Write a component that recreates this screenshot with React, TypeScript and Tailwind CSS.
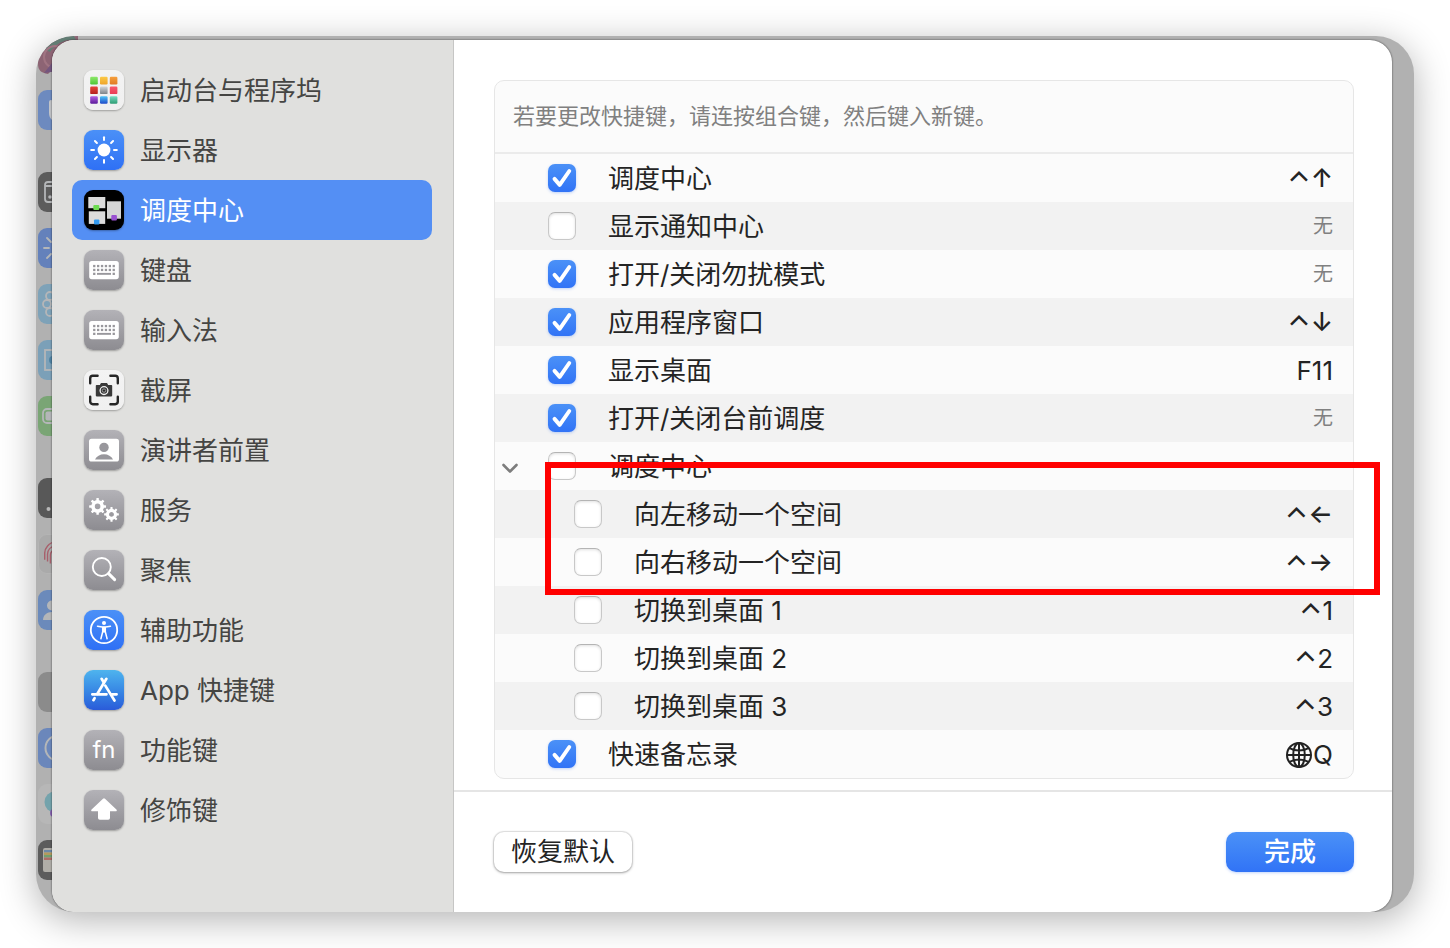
import { useState } from "react";
import type { ReactNode } from "react";

/* ---------- sidebar glyphs, all on a 40 x 40 grid ---------- */

const svgClass = "size-10 block";

function LaunchpadGlyph() {
  const cells = [
    ["#8de86b", "#4fc636"], ["#fbc947", "#f0a52c"], ["#f6a03c", "#e07a25"],
    ["#e8453b", "#b3201c"], ["#d3d6da", "#7d8388"], ["#f9586c", "#ea3d55"],
    ["#b45fe0", "#5a1a9a"], ["#4fc4f7", "#1f49c9"], ["#76dcc0", "#2e9c74"],
  ];
  return (
    <svg viewBox="0 0 40 40" className={svgClass} aria-hidden="true">
      <defs>
        {cells.map(([a, b], i) => (
          <linearGradient key={i} id={`cell${i}`} x1="0" y1="0" x2="0" y2="1">
            <stop offset="0" stopColor={a} />
            <stop offset="1" stopColor={b} />
          </linearGradient>
        ))}
      </defs>
      {cells.map((_, i) => (
        <rect key={i} x={6.2 + (i % 3) * 9.8} y={6.8 + Math.floor(i / 3) * 9.7} width="7.6" height="7.6" rx="1.2" fill={`url(#cell${i})`} />
      ))}
    </svg>
  );
}

function SunGlyph() {
  return (
    <svg viewBox="0 0 40 40" className={svgClass} aria-hidden="true">
      <circle cx="20" cy="20" r="6.4" fill="#fff" />
      <g stroke="#fff" strokeWidth="2" strokeLinecap="round">
        {[0, 45, 90, 135, 180, 225, 270, 315].map((a) => (
          <line key={a} x1="20" y1="7.2" x2="20" y2="10" transform={`rotate(${a} 20 20)`} />
        ))}
      </g>
    </svg>
  );
}

function MissionGlyph() {
  return (
    <svg viewBox="0 0 40 40" className={svgClass} aria-hidden="true">
      <rect x="4.3" y="7" width="17" height="11.2" fill="#dcdcdc" />
      <rect x="4.8" y="21.3" width="16.4" height="12.6" fill="#dcdcdc" />
      <rect x="23" y="11.3" width="14" height="17.4" fill="#d5d5d5" />
      <rect x="9.3" y="15" width="6" height="5" rx="1" fill="#6ddc52" />
      <rect x="10" y="29.6" width="5.4" height="5" rx="1" fill="#349bf0" />
      <rect x="27.3" y="25" width="5.6" height="5.6" rx="1" fill="#9950d0" />
    </svg>
  );
}

function KeyboardGlyph() {
  return (
    <svg viewBox="0 0 40 40" className={svgClass} aria-hidden="true">
      <rect x="5.2" y="11" width="29.6" height="18.2" rx="2.6" fill="#fff" />
      <g fill="#98979c">
        {[0, 1, 2, 3, 4, 5].map((c) => (
          <g key={c}>
            <rect x={9.1 + c * 3.9} y="14.9" width="2.3" height="2.3" />
            <rect x={9.1 + c * 3.9} y="18.8" width="2.3" height="2.3" />
          </g>
        ))}
        <rect x="9.1" y="22.7" width="2.3" height="2.3" />
        <rect x="13" y="22.9" width="14" height="1.9" />
        <rect x="28.6" y="22.7" width="2.3" height="2.3" />
      </g>
    </svg>
  );
}

function ScreenshotGlyph() {
  return (
    <svg viewBox="0 0 40 40" className={svgClass} aria-hidden="true">
      <g fill="none" stroke="#262626" strokeWidth="2.4" strokeLinecap="round">
        <path d="M6.2 13.2V8.4a2.6 2.6 0 0 1 2.6-2.6h4.8M26.4 5.8h4.8a2.6 2.6 0 0 1 2.6 2.6v4.8M33.8 26.8v4.8a2.6 2.6 0 0 1-2.6 2.6h-4.8M13.6 34.2H8.8a2.6 2.6 0 0 1-2.6-2.6v-4.8" />
      </g>
      <path d="M12.6 15h3.2l1.2-1.9h6l1.2 1.9h3.2a.8.8 0 0 1 .8.8v9.8a.8.8 0 0 1-.8.8H12.6a.8.8 0 0 1-.8-.8v-9.8a.8.8 0 0 1 .8-.8z" fill="#3a3a3a" />
      <circle cx="20" cy="20.6" r="3.9" fill="#3a3a3a" stroke="#f4f4f4" strokeWidth="1.3" />
      <circle cx="20" cy="20.6" r="1.7" fill="#2a2a2a" stroke="#d8d8d8" strokeWidth=".6" />
    </svg>
  );
}

function PresenterGlyph() {
  return (
    <svg viewBox="0 0 40 40" className={svgClass} aria-hidden="true">
      <rect x="5" y="8.8" width="30" height="22.8" rx="2.6" fill="#fff" />
      <circle cx="20" cy="17.4" r="4.7" fill="#98979c" />
      <path d="M11 29.6c1.6-3.4 5-5.4 9-5.4s7.4 2 9 5.4z" fill="#98979c" />
    </svg>
  );
}

function Gear({ cx, cy, r }: { cx: number; cy: number; r: number }) {
  return (
    <g transform={`translate(${cx} ${cy})`}>
      {[0, 45, 90, 135, 180, 225, 270, 315].map((a) => (
        <rect key={a} x={-r * 0.2} y={-r * 1.36} width={r * 0.4} height={r * 0.6} rx=".5" fill="#fff" transform={`rotate(${a})`} />
      ))}
      <circle r={r * 0.74} fill="none" stroke="#fff" strokeWidth={r * 0.58} />
    </g>
  );
}

function GearsGlyph() {
  return (
    <svg viewBox="0 0 40 40" className={svgClass} aria-hidden="true">
      <Gear cx={13.6} cy={16.4} r={6.2} />
      <Gear cx={27.5} cy={24.4} r={5.4} />
    </svg>
  );
}

function SpotlightGlyph() {
  return (
    <svg viewBox="0 0 40 40" className={svgClass} aria-hidden="true">
      <circle cx="17.8" cy="17" r="9" fill="none" stroke="#fff" strokeWidth="1.9" />
      <path d="M24.6 23.6l6 6" stroke="#fff" strokeWidth="3" strokeLinecap="round" />
    </svg>
  );
}

function AccessibilityGlyph() {
  return (
    <svg viewBox="0 0 40 40" className={svgClass} aria-hidden="true">
      <circle cx="20" cy="20" r="13.2" fill="none" stroke="#fff" strokeWidth="1.8" />
      <circle cx="20" cy="12.9" r="2" fill="#fff" />
      <path d="M13.5 16.2l4.8.9h3.4l4.8-.9M18.700 17.5v4.3l-1.8 6.9M21.3 17.5v4.3l1.8 6.9" fill="none" stroke="#fff" strokeWidth="1.5" strokeLinecap="round" strokeLinejoin="round" />
      <path d="M18.2 16.8h3.6v5.8h-3.6z" fill="#fff" />
    </svg>
  );
}

function AppStoreGlyph() {
  return (
    <svg viewBox="0 0 40 40" className={svgClass} aria-hidden="true">
      <g stroke="#fff" strokeWidth="2.7" strokeLinecap="round" fill="none">
        <path d="M22.4 8.8L13.4 23.8" />
        <path d="M17.6 8.8l1.8 3" />
        <path d="M21.3 15.6l9.2 14.9" />
        <path d="M8.3 24.3h14.2M28 24.3h4.6" />
        <path d="M10.6 28.2l-1.2 2" />
      </g>
    </svg>
  );
}

function FnGlyph() {
  return <span className="text-[24px] leading-10 text-white" aria-hidden="true">fn</span>;
}

function ShiftGlyph() {
  return (
    <svg viewBox="0 0 40 40" className={svgClass} aria-hidden="true">
      <path d="M19 8.7a1.5 1.5 0 0 1 2 0l11.4 10.7c.8.8.4 1.8-.7 1.8H26v6.8a1.8 1.8 0 0 1-1.8 1.8h-8.4a1.8 1.8 0 0 1-1.8-1.8v-6.8H8.3c-1.100 0-1.5-1-.7-1.8z" fill="#fff" />
    </svg>
  );
}

const gray = "bg-linear-to-b from-[#b3b2b7] to-[#8d8c91]";
const blue = "bg-linear-to-b from-[#4b90f7] to-[#2f70f5]";
const white = "bg-linear-to-b from-[#f3f3f3] to-[#f0f0f0]";

const sections: { name: string; tile: string; glyph: ReactNode }[] = [
  { name: "启动台与程序坞", tile: white, glyph: <LaunchpadGlyph /> },
  { name: "显示器", tile: blue, glyph: <SunGlyph /> },
  { name: "调度中心", tile: "bg-black", glyph: <MissionGlyph /> },
  { name: "键盘", tile: gray, glyph: <KeyboardGlyph /> },
  { name: "输入法", tile: gray, glyph: <KeyboardGlyph /> },
  { name: "截屏", tile: white, glyph: <ScreenshotGlyph /> },
  { name: "演讲者前置", tile: gray, glyph: <PresenterGlyph /> },
  { name: "服务", tile: gray, glyph: <GearsGlyph /> },
  { name: "聚焦", tile: gray, glyph: <SpotlightGlyph /> },
  { name: "辅助功能", tile: blue, glyph: <AccessibilityGlyph /> },
  { name: "App 快捷键", tile: "bg-linear-to-b from-[#4fb4ee] to-[#2b5bd9]", glyph: <AppStoreGlyph /> },
  { name: "功能键", tile: gray, glyph: <FnGlyph /> },
  { name: "修饰键", tile: gray, glyph: <ShiftGlyph /> },
];

/* ---------- dimmed settings window behind the sheet ---------- */

function BackgroundStrip() {
  const tile = "size-10 shrink-0 rounded-[9px] overflow-hidden";
  const line = { fill: "none", stroke: "#b4b6b8", strokeWidth: 1.8 } as const;
  return (
    <div className="col-start-1 row-start-1 flex h-0 flex-col gap-4 pl-[2px]" aria-hidden="true">
      <div className="h-[38px] w-10 shrink-0">
        <svg viewBox="0 0 40 38" className="block h-[38px] w-10">
          <path d="M0 24C4 10 18 1 40 0v8L10 38C3 37 0 34 0 28z" fill="#8d6474" />
          <path d="M6 13C14 4 26 0 36 0l2 4C26 3 18 8 12 16z" fill="#627d74" />
          <circle cx="17" cy="21" r="11" fill="none" stroke="#a07482" strokeWidth="2" />
          <path d="M6 37l8-10 6 8z" fill="#73567f" />
        </svg>
      </div>
      <div className={`${tile} mb-[26px] bg-[#6d8abf]`}>
        <svg viewBox="0 0 40 40"><path d="M11 12a2 2 0 0 1 4 0v18h-1c-2-2-3-4-3-7z" fill="#c2c4c8" /></svg>
      </div>
      <div className={`${tile} bg-[#5c5c5c]`}>
        <svg viewBox="0 0 40 40"><rect x="7" y="10" width="26" height="20" rx="3" {...line} /><path d="M7 14h26" {...line} /><circle cx="12" cy="25" r="1.8" fill="#b4b6b8" /></svg>
      </div>
      <div className={`${tile} bg-[#6481bb]`}>
        <svg viewBox="0 0 40 40"><path d="M6 20h5M9 10l4 4M9 30l4-4" {...line} strokeLinecap="round" /></svg>
      </div>
      <div className={`${tile} bg-[#7ea2b8]`}>
        <svg viewBox="0 0 40 40"><circle cx="12" cy="12" r="4" {...line} /><circle cx="9" cy="20" r="4" {...line} /><circle cx="12" cy="28" r="4" {...line} /></svg>
      </div>
      <div className={`${tile} bg-[#7ba0b8]`}>
        <svg viewBox="0 0 40 40"><rect x="7" y="10" width="24" height="20" {...line} /><circle cx="15" cy="20" r="4" fill="#4f83a3" /></svg>
      </div>
      <div className={`${tile} mb-[26px] bg-[#7aa575]`}>
        <svg viewBox="0 0 40 40"><rect x="5" y="13" width="28" height="14" rx="4" {...line} /><rect x="7.5" y="15.5" width="20" height="9" rx="2" fill="#b4b6b8" /></svg>
      </div>
      <div className={`${tile} bg-[#585858]`}>
        <svg viewBox="0 0 40 40"><circle cx="10.5" cy="31" r="2" fill="#b8b8b8" /></svg>
      </div>
      <div className={`${tile} border border-[#b4b4b4] bg-[#aaaaaa]`}>
        <svg viewBox="0 0 40 40"><g fill="none" stroke="#a8606c" strokeWidth="1.5"><path d="M6 26V19c0-5 4-11 12-12" /><path d="M9 28V20c0-4 3-8 9-9" /><path d="M12 30V21c0-3 2-5 6-6" /></g></svg>
      </div>
      <div className={`${tile} mb-[26px] bg-[#6b8abb]`}>
        <svg viewBox="0 0 40 40"><circle cx="14" cy="15.5" r="5" fill="#b4b6b8" /><path d="M5 30c0-5 4-8 9-8h5v8z" fill="#b4b6b8" /></svg>
      </div>
      <div className={`${tile} bg-[#8b8b8b]`} />
      <div className={`${tile} bg-[#6b87bb]`}>
        <svg viewBox="0 0 40 40"><circle cx="20" cy="20" r="12.5" {...line} strokeWidth={2} /></svg>
      </div>
      <div className={`${tile} bg-[#b7b7b7]`}>
        <svg viewBox="0 0 40 40"><circle cx="17" cy="18" r="10.5" fill="#74a3ac" /><circle cx="16" cy="29" r="4" fill="#8560b0" /></svg>
      </div>
      <div className={`${tile} bg-[#5c5c5c]`}>
        <svg viewBox="0 0 40 40"><rect x="5" y="8" width="30" height="24" rx="2" fill="#b0aea8" /><path d="M6 10h28v2.5H6z" fill="#6b88a8" /><path d="M6 12.5h28V15H6z" fill="#b39a5d" /><path d="M6 15h28v2.5H6z" fill="#72a06f" /><path d="M6 17.5h28V20H6z" fill="#ad6d68" /></svg>
      </div>
    </div>
  );
}

/* ---------- shortcut list ---------- */

type Shortcut = {
  name: string;
  keys?: string;
  control?: boolean;
  globe?: boolean;
  on?: boolean;
  level?: number;
  group?: boolean;
};

const shortcuts: Shortcut[] = [
  { name: "调度中心", keys: "↑", control: true, on: true },
  { name: "显示通知中心" },
  { name: "打开/关闭勿扰模式", on: true },
  { name: "应用程序窗口", keys: "↓", control: true, on: true },
  { name: "显示桌面", keys: "F11", on: true },
  { name: "打开/关闭台前调度", on: true },
  { name: "调度中心", group: true },
  { name: "向左移动一个空间", keys: "←", control: true, level: 1 },
  { name: "向右移动一个空间", keys: "→", control: true, level: 1 },
  { name: "切换到桌面 1", keys: "1", control: true, level: 1 },
  { name: "切换到桌面 2", keys: "2", control: true, level: 1 },
  { name: "切换到桌面 3", keys: "3", control: true, level: 1 },
  { name: "快速备忘录", keys: "Q", globe: true, on: true },
];

function GlobeGlyph() {
  return (
    <svg viewBox="0 0 28 28" className="size-7" fill="none" stroke="#222" strokeWidth="2" aria-hidden="true">
      <circle cx="14" cy="14" r="12" />
      <ellipse cx="14" cy="14" rx="5.8" ry="12" />
      <path d="M14 2v24M2 14h24M4.6 7.2c5.4 3.2 13.4 3.2 18.8 0M4.6 20.8c5.4-3.2 13.4-3.2 18.8 0" />
    </svg>
  );
}

function Checkbox({ id, on }: { id: string; on: boolean }) {
  const [checked, setChecked] = useState(on);
  return (
    <span className="grid size-7 shrink-0">
      <input
        id={id}
        type="checkbox"
        checked={checked}
        onChange={(e) => setChecked(e.target.checked)}
        className="peer col-start-1 row-start-1 size-7 appearance-none rounded-[7px] border border-[#c8c8c8] border-t-[#b4b4b4] bg-white shadow-[inset_0_1px_3px_rgba(0,0,0,0.12)] checked:border-0 checked:bg-linear-to-b checked:from-[#4b91f7] checked:to-[#3173f6] checked:shadow-[0_1px_3px_rgba(49,115,246,0.3)]"
      />
      <svg viewBox="0 0 28 28" className="pointer-events-none invisible col-start-1 row-start-1 size-7 peer-checked:visible" aria-hidden="true">
        <path d="M6.5 14.9l5.2 6L21.3 7" fill="none" stroke="#fff" strokeWidth="3.9" strokeLinecap="round" strokeLinejoin="round" />
      </svg>
    </span>
  );
}

function ShortcutRow({ item, index }: { item: Shortcut; index: number }) {
  const id = `shortcut-${index}`;
  return (
    <tr className="h-12 even:bg-[#f2f2f2]">
      <td className="p-0">
        <div className="flex items-center">
          <div className={item.level ? "w-[79px] shrink-0" : "w-[53px] shrink-0"}>
            {item.group && (
              <button type="button" aria-label="折叠" aria-expanded="true" className="ml-[7px] block pt-1">
                <svg viewBox="0 0 16 12" className="h-3 w-4" aria-hidden="true">
                  <path d="M1.5 3L8 9.5l6.5-6.5" fill="none" stroke="#7d7d7d" strokeWidth="2.6" strokeLinecap="round" strokeLinejoin="round" />
                </svg>
              </button>
            )}
          </div>
          <Checkbox id={id} on={!!item.on} />
          <label htmlFor={id} className="pt-0.5 pl-8 text-[26px] leading-9 whitespace-nowrap">{item.name}</label>
        </div>
      </td>
      <td className="p-0 pr-5 text-right">
        {item.keys ? (
          <span className="flex h-9 items-center justify-end pt-0.5 text-[26px] leading-9">
            {item.control && <span className="pt-1.5 text-[30px]">⌃</span>}
            {item.globe && <GlobeGlyph />}
            <span className={/[←-↓]/.test(item.keys) ? "pb-0.5 font-medium" : ""}>{item.keys}</span>
          </span>
        ) : (
          !item.group && <span className="text-[20px] leading-9 text-[#808080]">无</span>
        )}
      </td>
    </tr>
  );
}

export default function App() {
  const [active, setActive] = useState(2);
  return (
    <div className="bg-white p-9 font-['Inter','Noto_Sans_CJK_SC',sans-serif] text-[#242424]">
      <div className="grid overflow-hidden rounded-[38px] bg-[#b1b1b1] shadow-[0_8px_36px_rgba(0,0,0,0.3)]">
        <BackgroundStrip />
        <div className="z-10 col-start-1 row-start-1 mt-1 mr-[22px] ml-4 flex overflow-hidden rounded-[22px] bg-white shadow-[0_0_2px_rgba(0,0,0,0.7)]">
          <nav aria-label="快捷键分类" className="w-[402px] shrink-0 border-r border-[#c6c6c5] bg-[#e0e0de] p-5">
            <ul>
              {sections.map((s, i) => (
                <li key={s.name}>
                  <button
                    type="button"
                    onClick={() => setActive(i)}
                    aria-current={i === active}
                    className={`flex h-15 w-[360px] items-center gap-4 rounded-[10px] px-3 text-left text-[26px] leading-9 ${i === active ? "bg-[#548ff4] text-white" : "text-[#454543]"}`}
                  >
                    <span className={`flex size-10 shrink-0 justify-center overflow-hidden rounded-[9px] shadow-[0_1px_2px_rgba(0,0,0,0.3)] ${s.tile}`}>{s.glyph}</span>
                    <span className="pt-0.5">{s.name}</span>
                  </button>
                </li>
              ))}
            </ul>
          </nav>

          <main className="flex min-w-0 flex-1 flex-col">
            <div className="pt-10 pr-[38px] pb-[11px] pl-10">
              <div className="relative">
                <div className="overflow-hidden rounded-[10px] border border-[#e6e6e6] bg-[#fbfbfb]">
                  <p className="flex h-[73px] items-center border-b-2 border-[#ebebeb] px-[18px] pb-0.5 text-[22px] leading-8 text-[#808080]">
                    若要更改快捷键，请连按组合键，然后键入新键。
                  </p>
                  <table className="w-full border-collapse">
                    <tbody>
                      {shortcuts.map((item, i) => (
                        <ShortcutRow key={i} item={item} index={i} />
                      ))}
                    </tbody>
                  </table>
                </div>
                <div className="pointer-events-none absolute top-[382px] -right-[26px] left-[51px] h-[133px] border-6 border-[#ff0000]" />
              </div>
            </div>
            <footer className="flex justify-between border-t-2 border-[#e5e5e5] py-10 pr-[38px] pl-10 text-[26px] leading-9">
              <button type="button" className="h-10 rounded-[10px] bg-white px-[17px] shadow-[0_0_1px_1px_rgba(0,0,0,0.1),0_1px_3px_rgba(0,0,0,0.3)]">恢复默认</button>
              <button type="button" className="h-10 w-32 rounded-[10px] bg-linear-to-b from-[#4b91f7] to-[#3173f6] font-medium text-white shadow-[0_1px_3px_rgba(49,115,246,0.3)]">完成</button>
            </footer>
          </main>
        </div>
      </div>
    </div>
  );
}
